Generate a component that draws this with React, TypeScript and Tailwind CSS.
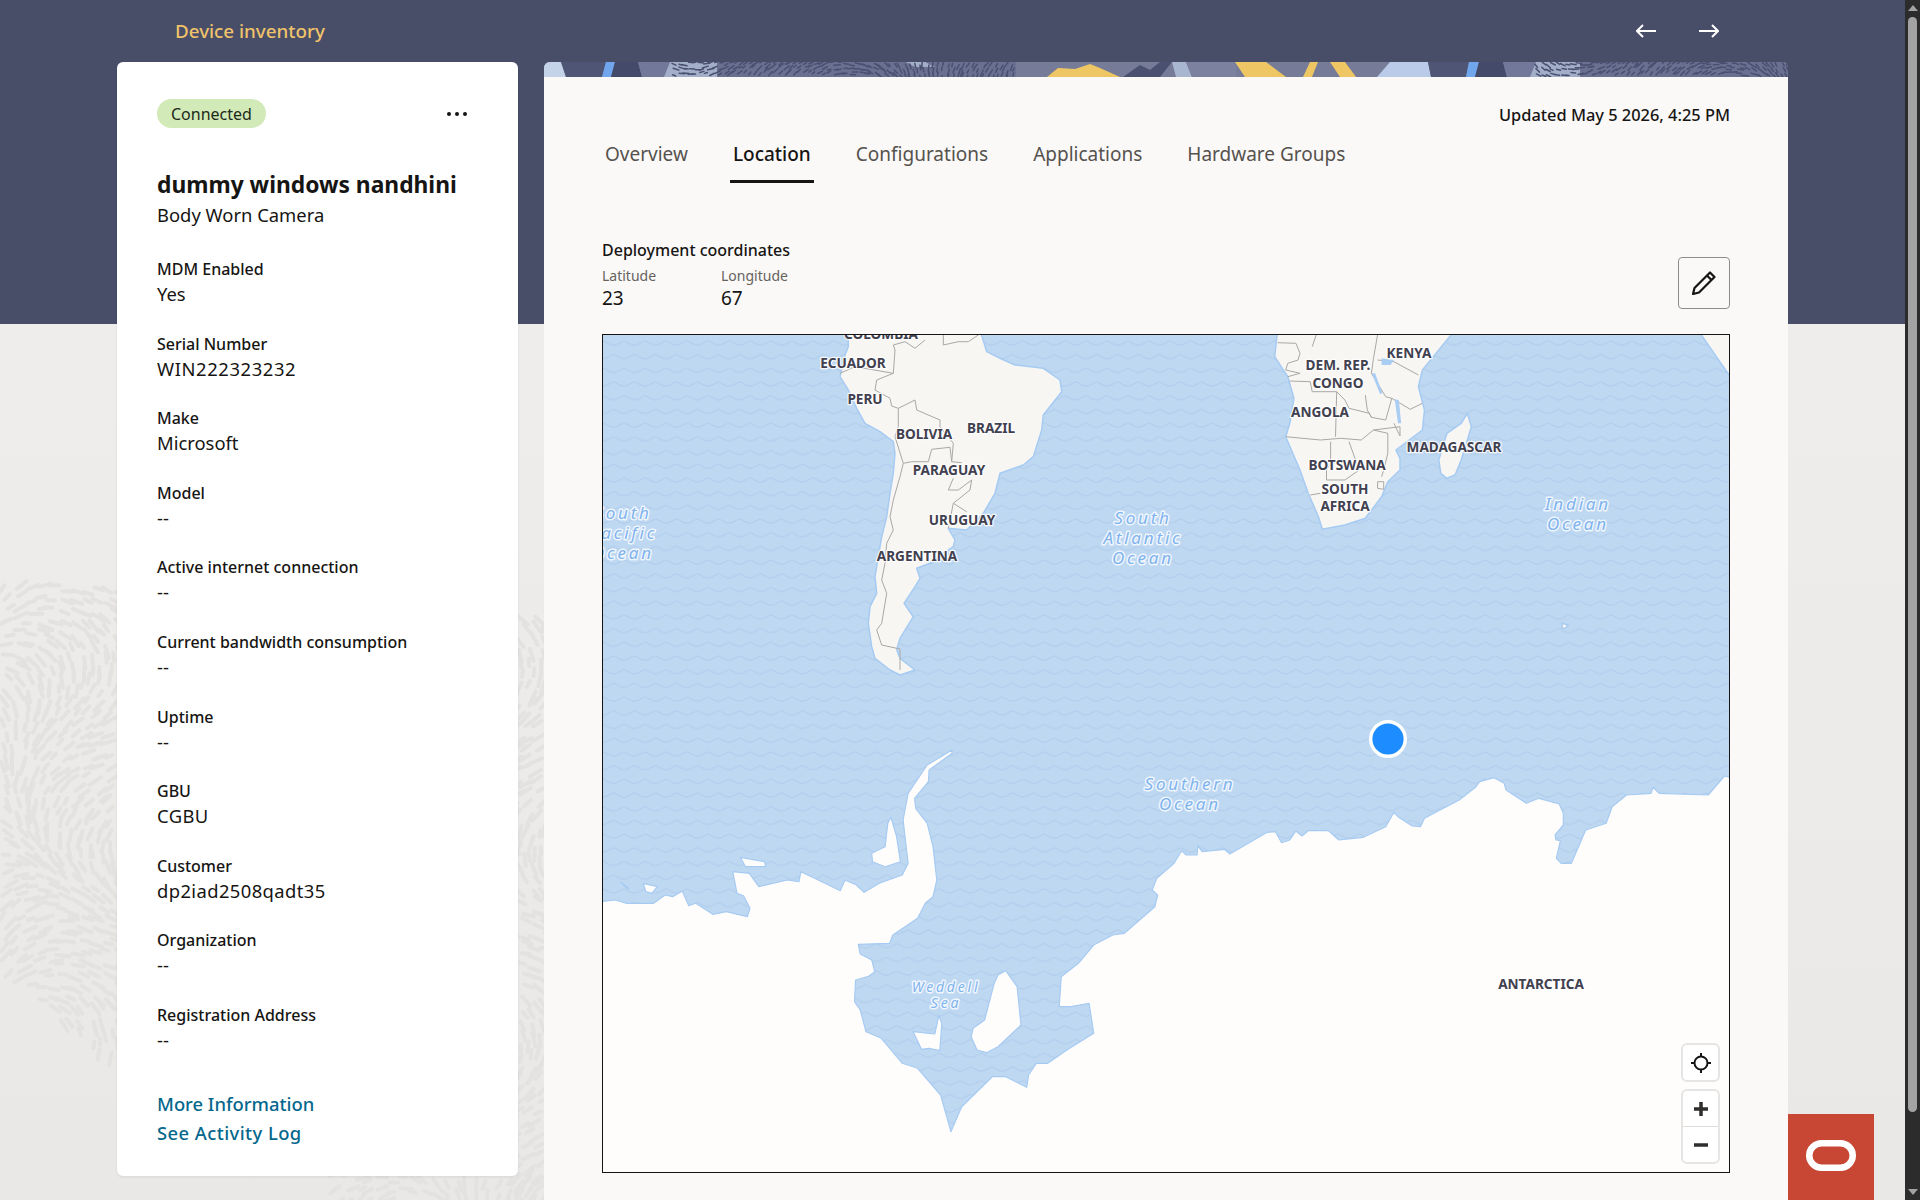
import { useMemo } from "react";

type Pt = [number, number];

// crop coordinates -> page coordinates, the map svg uses page coords in its viewBox
const fromCrop = (ox: number, oy: number, sx: number, sy: number) => (pts: Pt[]) =>
  pts.map(([x, y]) => `${(ox + x / sx).toFixed(1)},${(oy + y / sy).toFixed(1)}`).join(" ");
const am = fromCrop(600, 330, 3, 3);
const af = fromCrop(1100, 330, 2.45, 3);
const wed = fromCrop(600, 730, 2.613, 3);
const ant = fromCrop(1100, 700, 2.45, 3);

const southAmerica: Pt[] = [[745, 0], [745, 50], [735, 75], [720, 140], [745, 180], [770, 235], [795, 280], [840, 305], [880, 335], [885, 370], [880, 430], [870, 490], [860, 560], [845, 620], [835, 680], [825, 740], [830, 790], [810, 830], [805, 880], [815, 950], [825, 985], [870, 1020], [900, 1035], [945, 1020], [900, 985], [890, 960], [900, 925], [940, 860], [912, 820], [945, 770], [960, 745], [950, 715], [990, 700], [1000, 690], [1060, 650], [1065, 630], [1045, 595], [1100, 600], [1150, 550], [1185, 490], [1200, 430], [1270, 405], [1300, 380], [1325, 300], [1330, 255], [1385, 185], [1380, 150], [1330, 115], [1245, 105], [1200, 85], [1160, 65], [1140, 0]];
const samBorders: Pt[][] = [
  [[720, 130], [765, 110], [880, 130], [830, 150], [825, 180], [870, 205], [875, 228], [895, 235], [945, 210], [950, 240], [1020, 270], [1020, 290], [1060, 340], [1055, 395], [1085, 398]],
  [[895, 235], [895, 290], [885, 320], [910, 400], [935, 395], [985, 395], [995, 358], [1050, 352], [1055, 395]],
  [[1060, 445], [1045, 480], [1075, 480], [1115, 450], [1110, 480], [1060, 520], [1050, 570], [1045, 595]],
  [[1060, 520], [1100, 545]],
  [[910, 400], [900, 440], [880, 510], [870, 560], [880, 600], [860, 640], [855, 700], [845, 750], [860, 790], [845, 880], [830, 900], [845, 945], [900, 957], [900, 1020]],
  [[880, 130], [885, 60], [880, 45], [915, 35], [945, 55], [975, 30]],
  [[1030, 15], [1030, 45], [1075, 35], [1105, 35], [1135, 15]],
];

const africa: Pt[] = [[435, 0], [428, 80], [460, 140], [475, 205], [465, 280], [455, 320], [490, 420], [510, 490], [535, 560], [545, 598], [600, 585], [650, 565], [690, 500], [705, 455], [735, 420], [735, 385], [725, 360], [790, 300], [795, 240], [780, 170], [790, 120], [810, 90], [870, 0]];
const madagascar: Pt[] = [[900, 250], [910, 290], [885, 390], [870, 435], [850, 445], [835, 430], [830, 390], [850, 310], [885, 280]];
const arabia: Pt[] = [[1465, 0], [1510, 80], [1543, 138], [1543, 0]];
const afBorders: Pt[][] = [
  [[435, 38], [480, 40], [490, 70], [485, 90], [460, 100], [455, 120], [490, 130], [460, 140]],
  [[465, 153], [515, 155], [520, 185], [580, 185], [600, 210], [610, 235], [660, 250], [665, 262]],
  [[580, 185], [577, 320]],
  [[455, 320], [540, 330], [590, 325], [640, 330], [670, 300], [705, 310], [705, 370], [695, 420], [690, 440]],
  [[565, 335], [565, 400], [555, 420], [555, 450], [600, 450], [635, 420], [610, 335]],
  [[515, 495], [540, 490]],
  [[680, 90], [720, 95], [780, 135]],
  [[650, 195], [655, 240], [665, 262], [700, 270], [715, 205], [760, 238], [790, 220]],
  [[670, 300], [735, 290], [735, 318], [720, 280]],
  [[680, 14], [670, 85], [665, 130], [700, 200], [715, 205]],
  [[530, 14], [520, 50]],
  [[680, 455], [695, 455], [695, 478], [680, 475], [680, 455]],
];
const afLakes: Pt[][] = [
  [[690, 85], [720, 90], [712, 105], [690, 105]],
  [[666, 130], [674, 130], [692, 190], [686, 192]],
  [[722, 208], [732, 210], [738, 280], [730, 280]],
];

const antarcticaWest: Pt[] = [[0, 515], [40, 510], [70, 520], [140, 520], [170, 495], [190, 500], [215, 483], [232, 527], [250, 520], [295, 553], [330, 545], [385, 560], [392, 535], [375, 497], [358, 490], [347, 425], [390, 430], [415, 470], [490, 450], [520, 455], [525, 425], [570, 450], [628, 482], [640, 450], [670, 465], [690, 487], [730, 460], [790, 435], [805, 400], [792, 270], [805, 190], [855, 105], [920, 60], [920, 70], [860, 120], [858, 155], [822, 205], [825, 235], [855, 280], [870, 350], [880, 450], [870, 500], [850, 520], [830, 565], [765, 615], [757, 640], [675, 643], [680, 672], [710, 690], [718, 725], [700, 740], [668, 750], [665, 815], [680, 840], [695, 905], [735, 925], [790, 1000], [830, 1015], [890, 1095], [917, 1205], [945, 1130], [1025, 1040], [1060, 1040], [1115, 1072], [1120, 1035], [1140, 1000], [1170, 1000], [1220, 960], [1290, 910], [1278, 820], [1230, 830], [1200, 830], [1205, 740], [1250, 700], [1290, 645], [1340, 615], [1370, 610], [1450, 530], [1457, 495], [1443, 480], [1455, 445], [1500, 400], [1520, 362], [1532, 375], [1560, 375]];
const antarcticaEast: Pt[] = [[240, 437], [250, 455], [305, 448], [318, 462], [410, 397], [430, 395], [445, 428], [465, 420], [480, 393], [495, 408], [510, 392], [560, 392], [585, 420], [645, 412], [700, 380], [720, 337], [730, 350], [765, 378], [785, 380], [795, 355], [880, 300], [920, 262], [930, 245], [965, 233], [990, 250], [995, 270], [1045, 310], [1075, 295], [1125, 312], [1135, 340], [1135, 375], [1115, 405], [1117, 420], [1128, 422], [1118, 475], [1130, 490], [1155, 490], [1190, 390], [1240, 370], [1255, 320], [1290, 285], [1350, 280], [1355, 262], [1370, 280], [1490, 285], [1530, 228], [1543, 232], [1543, 1500]];
const shelves: Pt[][] = [
  [[760, 262], [775, 320], [785, 395], [745, 410], [712, 395], [710, 370], [745, 350], [752, 280]],
  [[367, 382], [430, 395], [433, 410], [380, 410]],
  [[55, 457], [75, 475], [70, 475]],
  [[113, 460], [150, 470], [135, 490], [120, 485]],
  [[818, 905], [875, 912], [885, 857], [893, 880], [888, 962], [860, 955], [840, 958]],
  [[1040, 735], [1060, 722], [1090, 770], [1100, 885], [1040, 950], [1010, 968], [985, 960], [970, 920], [975, 895], [1005, 870], [1030, 760]],
];

const countries: [string, number, number][] = [
  ["COLOMBIA", 881, 333], ["ECUADOR", 853, 362], ["PERU", 865, 398], ["BOLIVIA", 924, 433], ["BRAZIL", 991, 427],
  ["PARAGUAY", 949, 469], ["URUGUAY", 962, 519], ["ARGENTINA", 917, 555], ["DEM. REP.", 1338, 364], ["CONGO", 1338, 382],
  ["KENYA", 1409, 352], ["ANGOLA", 1320, 411], ["MADAGASCAR", 1454, 446], ["BOTSWANA", 1347, 464], ["SOUTH", 1345, 488],
  ["AFRICA", 1345, 505], ["ANTARCTICA", 1541, 983],
];
const oceans: [string, number, number, number][] = [
  ["South", 623, 512, 17], ["Pacific", 623, 532, 17], ["Ocean", 623, 552, 17],
  ["South", 1143, 517, 17], ["Atlantic", 1143, 537, 17], ["Ocean", 1143, 557, 17],
  ["Indian", 1578, 503, 17], ["Ocean", 1578, 523, 17],
  ["Southern", 1190, 783, 17], ["Ocean", 1190, 803, 17],
  ["Weddell", 946, 986, 14], ["Sea", 946, 1002, 14],
];

const fields: [string, string, string?][] = [
  ["MDM Enabled", "Yes"], ["Serial Number", "WIN222323232", "tracking-[0.6px]"], ["Make", "Microsoft"], ["Model", "--"],
  ["Active internet connection", "--"], ["Current bandwidth consumption", "--"], ["Uptime", "--"], ["GBU", "CGBU", "tracking-[0.4px]"],
  ["Customer", "dp2iad2508qadt35", "tracking-[0.4px]"], ["Organization", "--"], ["Registration Address", "--"],
];

const tabs = ["Overview", "Location", "Configurations", "Applications", "Hardware Groups"];

function seeded(seed: number) {
  let s = seed;
  return () => {
    s = (s * 16807) % 2147483647;
    return s / 2147483647;
  };
}

function Dashes({ x0, x1, y0, y1, step, len, keep, seed }: { x0: number; x1: number; y0: number; y1: number; step: number; len: number; keep: (x: number, y: number) => boolean; seed: number }) {
  const lines = useMemo(() => {
    const rnd = seeded(seed);
    const out: { x: number; y: number; dx: number; dy: number }[] = [];
    for (let y = y0; y < y1; y += step) {
      for (let x = x0; x < x1; x += step) {
        const px = x + rnd() * step * 0.7;
        const py = y + rnd() * step * 0.7;
        if (!keep(px, py)) continue;
        const a = Math.sin(px / 70) * 1.4 + Math.cos(py / 60) * 1.2 + rnd() * 0.3;
        const l = len * (0.5 + rnd() * 0.6);
        out.push({ x: px, y: py, dx: Math.cos(a) * l, dy: Math.sin(a) * l });
      }
    }
    return out;
  }, []);
  return (
    <>
      {lines.map((l, i) => (
        <line key={i} x1={l.x} y1={l.y} x2={l.x + l.dx} y2={l.y + l.dy} />
      ))}
    </>
  );
}

function PageTexture() {
  return (
    <svg className="absolute left-0 top-[324px]" width="1905" height="876" viewBox="0 324 1905 876" aria-hidden>
      <g stroke="#e3e2e0" strokeWidth="4" strokeLinecap="round">
        <Dashes x0={0} x1={120} y0={585} y1={1065} step={11} len={13} seed={7} keep={(x, y) => y < 976 + x * 0.75 && y > 585} />
        <Dashes x0={517} x1={545} y0={610} y1={1200} step={11} len={13} seed={13} keep={() => true} />
        <Dashes x0={330} x1={545} y0={1176} y1={1200} step={11} len={12} seed={23} keep={() => true} />
      </g>
    </svg>
  );
}

function Banner() {
  const seg = (a: number, b: number, c: number, d: number) => `${a},62 ${b},62 ${c},77 ${d},77`;
  return (
    <svg className="block h-[15px] w-full" viewBox="544 62 1244 15" preserveAspectRatio="none" aria-hidden>
      <rect x="544" y="62" width="1244" height="15" fill="#767c98" />
      <polygon points={seg(544, 561, 566, 544)} fill="#c5d3e8" />
      <polygon points={seg(561, 606, 602, 566)} fill="#4f5675" />
      <polygon points={seg(606, 615, 611, 602)} fill="#70a6ee" />
      <polygon points={seg(615, 638, 642, 611)} fill="#444a69" />
      <polygon points={seg(638, 670, 664, 642)} fill="#72789a" />
      <polygon points={seg(670, 717, 717, 664)} fill="#a3aec8" />
      <rect x="717" y="62" width="299" height="15" fill="#6a7090" />
      <polygon points="906,62 925,62 935,67 915,67" fill="#a3aec8" />
      <polygon points="1047,77 1058,68 1075,69 1090,64 1100,68 1120,77" fill="#eec764" />
      <polygon points="1123,77 1140,65 1150,70 1160,62 1172,62 1160,77" fill="#4a5070" />
      <polygon points={seg(1172, 1186, 1192, 1176)} fill="#a9b6cf" />
      <polygon points={seg(1186, 1236, 1236, 1192)} fill="#7b819e" />
      <polygon points={seg(1235, 1266, 1286, 1245)} fill="#eec764" />
      <polygon points={seg(1310, 1318, 1312, 1303)} fill="#eec764" />
      <polygon points={seg(1330, 1345, 1356, 1340)} fill="#eec764" />
      <polygon points={seg(1390, 1428, 1431, 1377)} fill="#b9cbe8" />
      <polygon points={seg(1428, 1469, 1466, 1431)} fill="#4f5675" />
      <polygon points={seg(1469, 1479, 1475, 1466)} fill="#70a6ee" />
      <polygon points={seg(1479, 1503, 1507, 1475)} fill="#444a69" />
      <polygon points={seg(1503, 1536, 1530, 1507)} fill="#72789a" />
      <polygon points={seg(1536, 1580, 1580, 1530)} fill="#a3aec8" />
      <rect x="1580" y="62" width="208" height="15" fill="#6a7090" />
      <g stroke="#4a5070" strokeWidth="1.5" strokeLinecap="round">
        <Dashes x0={672} x1={1016} y0={62} y1={77} step={5} len={6} seed={3} keep={() => true} />
        <Dashes x0={1535} x1={1788} y0={62} y1={77} step={5} len={6} seed={5} keep={() => true} />
      </g>
    </svg>
  );
}

function MapView() {
  const land = "#f8f6f3";
  const coast = "#a6cbf2";
  const line = "#a9a8a7";
  const face = "'Noto Sans', sans-serif";
  return (
    <svg className="block h-full w-full" viewBox="603 335 1126 837" preserveAspectRatio="none" role="img" aria-label="Map">
      <defs>
        <pattern id="waves" width="21" height="27.4" patternUnits="userSpaceOnUse" patternTransform="translate(603 338)">
          <path d="M0 3C3 3 5 7 10.5 7S18 3 21 3" fill="none" stroke="#b3cfec" strokeWidth="1.5" />
          <path d="M-10.5 16.7C-7.5 16.7 -5.5 20.7 0 20.7S7.500 16.7 10.5 16.7 15.5 20.7 21 20.7 28.5 16.7 31.5 16.7" fill="none" stroke="#b3cfec" strokeWidth="1.5" />
        </pattern>
      </defs>
      <rect x="603" y="335" width="1126" height="837" fill="#bfd8f2" />
      <rect x="603" y="335" width="1126" height="837" fill="url(#waves)" />

      <g stroke={coast} strokeWidth="1.5" strokeLinejoin="round">
        <polygon points={am(southAmerica)} fill={land} />
        <polygon points={af(africa)} fill={land} />
        <polygon points={af(madagascar)} fill={land} />
        <polygon points={af(arabia)} fill={land} />
        <polygon points={af([[1132, 880], [1147, 885], [1140, 895], [1132, 895]])} fill={land} />
      </g>
      <g fill="none" stroke={line} strokeWidth="1">
        {samBorders.map((b, i) => <polyline key={i} points={am(b)} />)}
        {afBorders.map((b, i) => <polyline key={i} points={af(b)} />)}
      </g>
      {afLakes.map((b, i) => <polygon key={i} points={af(b)} fill="#a9cdf3" />)}

      <g fill="#fffdfc" stroke={coast} strokeWidth="1.2" strokeLinejoin="round">
        <polygon points={`${wed(antarcticaWest)} ${ant(antarcticaEast)} 600,1200`} />
        {shelves.map((s, i) => <polygon key={i} points={wed(s)} />)}
      </g>

      <g fontFamily={face} fontWeight="700" fontSize="13.6" fill="#41404f" stroke="#ffffff" strokeOpacity="0.85" strokeWidth="2.5" strokeLinejoin="round" textAnchor="middle" dominantBaseline="central" paintOrder="stroke">
        {countries.map(([t, x, y]) => <text key={t} x={x} y={y}>{t}</text>)}
      </g>
      <g fontFamily={face} fontStyle="italic" fill="#7fb3ee" stroke="#f0f6fd" strokeWidth="3" strokeLinejoin="round" letterSpacing="2.8" textAnchor="middle" dominantBaseline="central" paintOrder="stroke">
        {oceans.map(([t, x, y, s]) => <text key={`${t}${x}`} x={x} y={y} fontSize={s}>{t}</text>)}
      </g>

      <circle cx="1388" cy="739" r="17.3" fill="#1c8cff" stroke="#ffffff" strokeWidth="3.4" />
    </svg>
  );
}

function MapControls() {
  return (
    <div className="absolute bottom-[8px] right-[9px] flex w-[39px] flex-col gap-[7px]">
      <button className="flex h-[39px] items-center justify-center rounded-[6px] border-2 border-[#e6e5e3] bg-white" aria-label="Locate">
        <svg width="20" height="20" viewBox="0 0 20 20" fill="none" stroke="#161513" strokeWidth="2">
          <circle cx="10" cy="10" r="6.5" />
          <path d="M10 0v4M10 16v4M0 10h4M16 10h4" />
        </svg>
      </button>
      <div className="flex h-[75px] flex-col rounded-[6px] border-2 border-[#e6e5e3] bg-white">
        <button className="flex flex-1 items-center justify-center border-b border-[#dfdedc]" aria-label="Zoom in">
          <svg width="14" height="14" viewBox="0 0 14 14" stroke="#2f2e2c" strokeWidth="3.5">
            <path d="M0 7h14M7 0v14" />
          </svg>
        </button>
        <button className="flex flex-1 items-center justify-center" aria-label="Zoom out">
          <svg width="14" height="4" viewBox="0 0 14 4" stroke="#2f2e2c" strokeWidth="3.5">
            <path d="M0 2h14" />
          </svg>
        </button>
      </div>
    </div>
  );
}

function DeviceCard() {
  return (
    <aside className="h-[1113.5px] w-[401px] shrink-0 rounded-[6px] bg-white px-[40px] pt-[37px] text-[#161513] shadow-[0_1px_3px_rgba(0,0,0,0.08)]">
      <div className="flex items-center justify-between">
        <span className="flex h-[29px] items-center rounded-full bg-[#d2e9b8] px-[14px] text-[16px] text-[#1d2a1a]">Connected</span>
        <div className="mr-[11px] flex gap-[4px]">
          <span className="h-[4px] w-[4px] rounded-full bg-[#161513]" />
          <span className="h-[4px] w-[4px] rounded-full bg-[#161513]" />
          <span className="h-[4px] w-[4px] rounded-full bg-[#161513]" />
        </div>
      </div>
      <h1 className="mt-[41px] whitespace-nowrap text-[22.8px] font-bold leading-[32px]">dummy windows nandhini</h1>
      <p className="text-[18.4px] leading-[28px]">Body Worn Camera</p>
      <dl className="mt-[28px] flex flex-col gap-[24.6px]">
        {fields.map(([label, value, extra]) => (
          <div key={label}>
            <dt className="text-[16px] font-medium leading-[24px]">{label}</dt>
            <dd className={`text-[18.4px] leading-[26px] ${extra ?? ""}`}>{value}</dd>
          </div>
        ))}
      </dl>
      <div className="mt-[36px] flex flex-col text-[18.4px] font-medium leading-[29px] text-[#04678c]">
        <a href="#more">More Information</a>
        <a href="#log" className="tracking-[0.43px]">See Activity Log</a>
      </div>
    </aside>
  );
}

function Scrollbar() {
  return (
    <div className="flex w-[15px] shrink-0 flex-col items-center bg-[#2c2c2c]">
      <svg className="mt-[5px] shrink-0" width="10" height="6" viewBox="0 0 10 6" fill="#a3a3a3"><path d="M5 0l5 6H0z" /></svg>
      <div className="mt-[6px] h-[1095px] w-[9px] rounded-full bg-[#a3a3a3]" />
      <svg className="mt-auto mb-[5px] shrink-0" width="10" height="6" viewBox="0 0 10 6" fill="#a3a3a3"><path d="M5 6L0 0h10z" /></svg>
    </div>
  );
}

export default function App() {
  return (
    <div className="flex h-[1200px] w-[1920px] overflow-hidden font-['Noto_Sans',sans-serif]">
      <main className="relative min-w-0 flex-1 bg-gradient-to-b from-[#f1efed] to-[#e9e8e6]">
        <PageTexture />
        <div className="absolute inset-x-0 top-0 h-[324px] bg-[#484d68]" />

        <div className="relative">
          <header className="flex h-[62px] items-center pl-[175px] pr-[186px]">
            <span className="text-[18.8px] font-medium text-[#f0c36a]">Device inventory</span>
            <div className="ml-auto flex items-center gap-[43px]">
              <svg width="20" height="14" viewBox="0 0 20 14" fill="none" stroke="#ffffff" strokeWidth="2"><path d="M7 1L1 7l6 6M1 7h19" /></svg>
              <svg width="20" height="14" viewBox="0 0 20 14" fill="none" stroke="#ffffff" strokeWidth="2"><path d="M13 1l6 6-6 6M19 7H0" /></svg>
            </div>
          </header>

          <div className="flex items-start gap-[26px] pl-[117px]">
            <DeviceCard />

            <section className="h-[1138px] w-[1244px] shrink-0 overflow-hidden rounded-t-[6px] bg-[#fbf9f8]">
              <Banner />
              <div className="px-[58px] pt-[26px]">
                <p className="text-right text-[16.4px] font-medium leading-[24px] text-[#161513]">Updated May 5 2026, 4:25 PM</p>
                <nav className="mt-[13px] flex gap-[39px]">
                  {tabs.map((tab) =>
                    tab === "Location" ? (
                      <a key={tab} href="#location" className="h-[43px] border-b-[3px] border-[#161513] px-[3px] text-[19px] font-medium leading-[28px] text-[#161513]">
                        {tab}
                      </a>
                    ) : (
                      <a key={tab} href={`#${tab}`} className="h-[43px] px-[3px] text-[19px] leading-[28px] text-[#55524e]">
                        {tab}
                      </a>
                    )
                  )}
                </nav>

                <div className="mt-[55px] flex items-end justify-between">
                  <div>
                    <h2 className="text-[16px] font-medium leading-[24px] text-[#161513]">Deployment coordinates</h2>
                    <div className="mt-[4px] flex">
                      <div className="w-[119px]">
                        <div className="text-[14px] leading-[20px] text-[#65625e]">Latitude</div>
                        <div className="text-[19px] leading-[24px] text-[#161513]">23</div>
                      </div>
                      <div>
                        <div className="text-[14px] leading-[20px] text-[#65625e]">Longitude</div>
                        <div className="text-[19px] leading-[24px] text-[#161513]">67</div>
                      </div>
                    </div>
                  </div>
                  <button className="mb-[1px] flex h-[52px] w-[52px] items-center justify-center rounded-[4px] border border-[#8f8d8a]" aria-label="Edit">
                    <svg width="24" height="24" viewBox="0 0 24 24" fill="none" stroke="#161513" strokeWidth="2.2" strokeLinejoin="round">
                      <path d="M1 23l1.5-6L18 1.5l4.5 4.5L7 21.5z" />
                      <path d="M15 4.5l4.500 4.500" />
                    </svg>
                  </button>
                </div>

                <div className="relative mt-[24px] h-[839px] border border-[#161513]">
                  <MapView />
                  <MapControls />
                </div>
              </div>
            </section>
          </div>
        </div>

        <div className="absolute bottom-0 left-[1788px] flex h-[86px] w-[86px] items-center justify-center bg-[#c74634] pb-[4px]">
          <svg width="50" height="31" viewBox="0 0 50 31" fill="none" stroke="#ffffff" strokeWidth="6.5" aria-label="Oracle">
            <rect x="3.25" y="3.25" width="43.5" height="24.5" rx="12.25" />
          </svg>
        </div>
      </main>
      <Scrollbar />
    </div>
  );
}
